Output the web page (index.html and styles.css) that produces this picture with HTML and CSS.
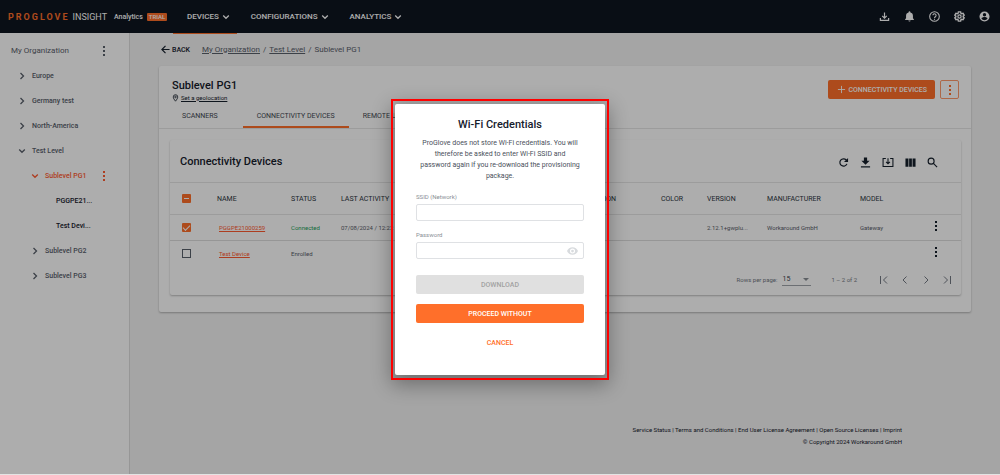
FILE: index.html
```html
<!DOCTYPE html>
<html lang="en">
<head>
<meta charset="utf-8">
<meta name="viewport" content="width=device-width, initial-scale=1">
<title>ProGlove Insight</title>
<link rel="stylesheet" href="styles.css">
</head>
<body>
<svg class="defs" aria-hidden="true">
  <symbol id="right" viewBox="0 0 8 8"><path d="M2.5 1l3 3-3 3"/></symbol>
  <symbol id="down" viewBox="0 0 8 8"><path d="M1.2 2.5l2.8 2.8 2.8-2.8"/></symbol>
  <symbol id="dots" viewBox="0 0 4 12"><path class="solid" d="M1 1h2v2H1zM1 5h2v2H1zM1 9h2v2H1z"/></symbol>
</svg>
<div class="app">
  <header class="topbar">
    <div class="brand">
      <span class="logo">PROGLOVE</span><span class="product">INSIGHT</span>
      <span class="edition">Analytics</span><span class="trial">TRIAL</span>
    </div>
    <nav class="menu">
      <button class="menu-item active">DEVICES <svg class="chev"><use href="#down"/></svg></button>
      <button class="menu-item">CONFIGURATIONS <svg class="chev"><use href="#down"/></svg></button>
      <button class="menu-item">ANALYTICS <svg class="chev"><use href="#down"/></svg></button>
    </nav>
    <div class="tools">
      <button class="tool" aria-label="Downloads"><svg viewBox="0 0 24 24"><path d="M12 3v12M7 10.500l5 5 5-5M3 15v5.500h18V15" fill="none" stroke="currentColor" stroke-width="2.600"/></svg></button>
      <button class="tool" aria-label="Notifications"><svg viewBox="0 0 24 24"><path d="M12 23a2.500 2.500 0 0 0 2.500-2.500h-5A2.500 2.500 0 0 0 12 23zm7.500-7v-5.500c0-3.500-2-6.300-5.500-7V2.500a2 2 0 0 0-4 0v1c-3.500.7-5.500 3.500-5.500 7V16l-2 2v1.500h19V18z"/></svg></button>
      <button class="tool" aria-label="Help"><svg viewBox="0 0 24 24"><circle cx="12" cy="12" r="10.500" fill="none" stroke="currentColor" stroke-width="2.400"/><path d="M8.500 9.500a3.500 3.500 0 1 1 5.600 2.800C12.800 13.300 12 13.800 12 15.500" fill="none" stroke="currentColor" stroke-width="2.300"/><path d="M10.800 16.800h2.400v2.400h-2.400z"/></svg></button>
      <button class="tool" aria-label="Settings"><svg viewBox="0 0 24 24" fill="none" stroke="currentColor"><path fill="none" stroke-width="3" d="M9.500 2h5l.6 3 1.800 1 2.900-1 2.400 4.200-2.300 2v1.600l2.300 2-2.400 4.200-2.900-1-1.800 1-.6 3h-5l-.6-3-1.800-1-2.900 1-2.400-4.200 2.300-2v-1.600l-2.300-2L4.200 5l2.900 1 1.800-1z"/><circle cx="12" cy="12" r="3.500" fill="none" stroke-width="2.800"/></svg></button>
      <button class="tool" aria-label="Account"><svg viewBox="0 0 24 24"><path fill-rule="evenodd" d="M12 1a11 11 0 1 0 0 22 11 11 0 0 0 0-22zm0 3.500a3.700 3.700 0 1 1 0 7.400 3.700 3.700 0 0 1 0-7.400zM12 20c-2.800 0-5.200-1.400-6.600-3.500.1-2.200 4.400-3.300 6.600-3.300s6.500 1.100 6.600 3.300A7.900 7.900 0 0 1 12 20z"/></svg></button>
    </div>
  </header>
  <div class="body">
    <aside class="sidebar">
      <div class="node root"><span class="label">My Organization</span><button class="more" aria-label="Organization actions"><svg class="dots"><use href="#dots"/></svg></button></div>
      <div class="node"><svg class="chev"><use href="#right"/></svg><span class="label">Europe</span></div>
      <div class="node"><svg class="chev"><use href="#right"/></svg><span class="label">Germany test</span></div>
      <div class="node"><svg class="chev"><use href="#right"/></svg><span class="label">North-America</span></div>
      <div class="node"><svg class="chev"><use href="#down"/></svg><span class="label">Test Level</span></div>
      <div class="node sub current"><svg class="chev"><use href="#down"/></svg><span class="label">Sublevel PG1</span><button class="more" aria-label="Level actions"><svg class="dots"><use href="#dots"/></svg></button></div>
      <div class="node leaf"><span class="label">PGGPE21...</span></div>
      <div class="node leaf"><span class="label">Test Devi...</span></div>
      <div class="node sub"><svg class="chev"><use href="#right"/></svg><span class="label">Sublevel PG2</span></div>
      <div class="node sub"><svg class="chev"><use href="#right"/></svg><span class="label">Sublevel PG3</span></div>
    </aside>
    <main class="main">
      <div class="crumbs">
        <button class="back"><svg viewBox="0 0 10 10"><path d="M9.500 5H1M5 1L1 5l4 4"/></svg>BACK</button>
        <nav class="trail"><a href="#">My Organization</a><span>/</span><a href="#">Test Level</a><span>/</span><span>Sublevel PG1</span></nav>
      </div>
      <section class="card">
        <div class="card-head">
          <div>
            <h1 class="title">Sublevel PG1</h1>
            <a class="geo" href="#"><svg viewBox="0 0 8 10"><path d="M4 9C2.500 7 1.200 5.300 1.200 3.700a2.800 2.800 0 0 1 5.600 0C6.800 5.300 5.500 7 4 9z"/><circle cx="4" cy="3.700" r="1"/></svg><span>Set a geolocation</span></a>
          </div>
          <div class="card-actions">
            <button class="add"><svg viewBox="0 0 10 10"><path d="M5 1v8M1 5h8"/></svg>CONNECTIVITY DEVICES</button>
            <button class="outline" aria-label="More actions"><svg class="dots"><use href="#dots"/></svg></button>
          </div>
        </div>
        <div class="tabs">
          <button class="tab">SCANNERS</button>
          <button class="tab selected">CONNECTIVITY DEVICES</button>
          <button class="tab">REMOTE UPDATES</button>
        </div>
        <div class="panel">
          <div class="panel-head">
            <h2 class="title">Connectivity Devices</h2>
            <div class="panel-tools">
              <button class="tool" aria-label="Refresh"><svg viewBox="0 0 24 24"><path d="M19.500 15a8 8 0 1 1-1.500-8.500l2 2" fill="none" stroke="currentColor" stroke-width="2.600"/><path d="M22 2v9h-9z"/></svg></button>
              <button class="tool" aria-label="Download"><svg viewBox="0 0 24 24"><path d="M8.500 1h7v7H21l-9 9-9-9h5.500zM2 20h20v3H2z"/></svg></button>
              <button class="tool wide" aria-label="Import"><svg viewBox="0 0 28 24"><path d="M9 2.500H2.500v19h23v-19H19M14 2v12M9.500 10.500L14 15l4.500-4.500" fill="none" stroke="currentColor" stroke-width="2.500"/></svg></button>
              <button class="tool" aria-label="Columns"><svg viewBox="0 0 24 24"><path d="M1 3h6.500v18H1zM9 3h6v18H9zM16.500 3H23v18h-6.500z"/></svg></button>
              <button class="tool" aria-label="Search"><svg viewBox="0 0 24 24"><g fill="none" stroke="currentColor" stroke-width="2.500"><circle cx="9" cy="9" r="6.500"/><path d="M14 14l8 8"/></g></svg></button>
            </div>
          </div>
          <table class="grid">
            <colgroup><col class="c-check"><col class="c-name"><col class="c-status"><col><col class="c-location"><col class="c-color"><col class="c-version"><col class="c-maker"><col class="c-model"><col class="c-more"></colgroup>
            <thead><tr><th><input class="box mixed" type="checkbox" aria-label="Select all"></th><th>NAME</th><th>STATUS</th><th>LAST ACTIVITY</th><th>LOCATION</th><th>COLOR</th><th>VERSION</th><th>MANUFACTURER</th><th>MODEL</th><th></th></tr></thead>
            <tbody>
              <tr><td><input class="box" type="checkbox" checked aria-label="Select PGGPE21000259"></td><td><a href="#">PGGPE21000259</a></td><td class="ok">Connected</td><td>07/08/2024 / 12:22</td><td></td><td></td><td>2.12.1+gwplu...</td><td>Workaround GmbH</td><td>Gateway</td><td><button class="more" aria-label="Device actions"><svg class="dots"><use href="#dots"/></svg></button></td></tr>
              <tr><td><input class="box" type="checkbox" aria-label="Select Test Device"></td><td><a href="#">Test Device</a></td><td>Enrolled</td><td></td><td></td><td></td><td></td><td></td><td></td><td><button class="more" aria-label="Device actions"><svg class="dots"><use href="#dots"/></svg></button></td></tr>
            </tbody>
          </table>
          <div class="pager">
            <label for="rows">Rows per page:</label>
            <span class="select"><select id="rows"><option>15</option><option>30</option></select></span>
            <span class="range">1 – 2 of 2</span>
            <div class="pages">
              <button aria-label="First page"><svg viewBox="0 0 10 8"><path d="M1.500 0v8M8 .5L4.500 4 8 7.500"/></svg></button>
              <button aria-label="Previous page"><svg viewBox="0 0 10 8"><path d="M6.500.5L3 4l3.500 3.500"/></svg></button>
              <button aria-label="Next page"><svg viewBox="0 0 10 8"><path d="M3.500.5L7 4 3.500 7.500"/></svg></button>
              <button aria-label="Last page"><svg viewBox="0 0 10 8"><path d="M8.500 0v8M2 .5L5.500 4 2 7.500"/></svg></button>
            </div>
          </div>
        </div>
      </section>
      <footer class="footer">
        <div><a href="#">Service Status</a> | <a href="#">Terms and Conditions</a> | <a href="#">End User License Agreement</a> | <a href="#">Open Source Licenses</a> | <a href="#">Imprint</a></div>
        <div>© Copyright 2024 Workaround GmbH</div>
      </footer>
    </main>
  </div>
  <div class="overlay">
    <div class="frame">
      <form class="dialog" role="dialog" aria-labelledby="dialog-title">
        <h2 class="title" id="dialog-title">Wi-Fi Credentials</h2>
        <p class="note">ProGlove does not store Wi-Fi credentials. You will therefore be asked to enter Wi-Fi SSID and password again if you re-download the provisioning package.</p>
        <label for="ssid">SSID (Network)</label>
        <div class="field"><input id="ssid" type="text"></div>
        <label for="pass">Password</label>
        <div class="field"><input id="pass" type="password"><button type="button" class="eye" aria-label="Show password"><svg viewBox="0 0 24 16"><path fill-rule="evenodd" d="M12 0C6.500 0 2 3.300 0 8c2 4.700 6.500 8 12 8s10-3.300 12-8c-2-4.700-6.500-8-12-8zm0 13.500a5.500 5.500 0 1 1 0-11 5.500 5.500 0 0 1 0 11zM12 5a3 3 0 1 0 0 6 3 3 0 0 0 0-6z"/></svg></button></div>
        <button type="button" class="btn" disabled>DOWNLOAD</button>
        <button type="button" class="btn primary">PROCEED WITHOUT</button>
        <button type="button" class="btn text">CANCEL</button>
      </form>
    </div>
  </div>
</div>
</body>
</html>
```
FILE: styles.css
```css
* { box-sizing: border-box; }
body {
  margin: 0;
  background: #e4e4e4;
  color: #16202c;
  font: 7px/10px Roboto, "Liberation Sans", sans-serif;
}
button, input, select { font: inherit; color: inherit; }
button { padding: 0; border: 0; background: none; }
a { color: inherit; }
svg { display: block; fill: currentColor; overflow: visible; }
.defs { position: absolute; width: 0; height: 0; }

.app {
  position: relative;
  display: flex;
  flex-direction: column;
  min-height: calc(100vh - 1px);
  background: #f3f3f3;
}
.title { margin: 0; font-size: 11px; line-height: 14px; font-weight: 500; }
.chev { width: 8px; height: 8px; fill: none; stroke: currentColor; stroke-width: 1.3; }
.dots { width: 4px; height: 12px; }

/* Top bar */
.topbar { display: flex; height: 33px; background: #0e1520; color: #fff; }
.brand { display: flex; align-items: center; width: 173px; padding-left: 8px; }
.logo { color: #ff6f2a; font-size: 9px; font-weight: 700; letter-spacing: 2px; }
.product { margin-left: 3px; font-size: 9px; }
.edition { margin-left: 7px; font-weight: 500; }
.trial { margin-left: 4px; padding: 0 2px; border-radius: 1px; background: #ff6f2a; font-size: 6px; line-height: 8px; font-weight: 500; }
.menu { display: flex; }
.menu-item { display: flex; align-items: center; gap: 3px; padding: 0 7px 0 14px; font-size: 8px; font-weight: 500; white-space: nowrap; }
.menu-item.active { box-shadow: 0 1px #ff6f2a; }
.tools { display: flex; align-items: center; gap: 14px; margin-left: auto; padding-right: 10px; }
.tool svg { width: 11px; height: 11px; }
.tool.wide svg { width: 12px; }

/* Organization tree */
.body { display: flex; flex: 1; }
.sidebar { width: 130px; flex: none; padding-top: 5px; border-right: 1px solid #dedede; background: #fff; color: #59606b; }
.node { display: flex; align-items: center; gap: 6px; height: 25px; padding: 0 23px 0 18px; font-weight: 500; }
.node.root { padding-left: 11px; font-size: 8px; font-weight: 400; }
.node.sub { padding-left: 31px; }
.node.leaf { padding-left: 56px; color: #16202c; }
.node .more { margin-left: auto; }
.node.current { color: #ff5a30; }

/* Page */
.main { flex: 1; min-width: 0; padding: 0 29px; }
.crumbs { display: flex; align-items: center; gap: 12px; height: 33px; font-size: 8px; }
.back { display: flex; align-items: center; gap: 2px; padding-left: 2px; font-size: 7px; font-weight: 500; }
.back svg { width: 9px; height: 9px; fill: none; stroke: currentColor; stroke-width: 1.3; }
.trail { display: flex; gap: 3px; color: #59606b; }
.card { border-radius: 2px; background: #fff; box-shadow: 0 1px 2px #0004; padding-bottom: 17px; }
.card-head { display: flex; justify-content: space-between; padding: 13px 12px 0 13px; }
.geo { display: flex; align-items: center; gap: 2px; height: 9px; font-size: 6px; }
.geo svg { width: 7px; height: 8px; fill: none; stroke: currentColor; }
.card-actions { display: flex; gap: 5px; padding-top: 1px; }
.add { display: flex; align-items: center; gap: 2px; height: 19px; padding: 0 8px 0 9px; border-radius: 2px; background: #ff6f2a; color: #fff; font-weight: 500; }
.add svg { width: 9px; height: 9px; stroke: currentColor; }
.outline { display: grid; place-items: center; width: 19px; height: 19px; border: 1px solid #ff9a6b; border-radius: 2px; color: #ff6f2a; }
.tabs { display: flex; padding-left: 9px; border-bottom: 1px solid #e6e6e6; }
.tab { height: 26px; padding: 2px 14px 0; color: #3f4752; white-space: nowrap; }
.tab.selected { margin-left: 11px; border-bottom: 2px solid #ff6f2a; padding-top: 4px; }

.panel { margin: 11px 10px 0 11px; border-radius: 2px; box-shadow: 0 1px 2px #0004; }
.panel-head { display: flex; align-items: center; justify-content: space-between; height: 42px; padding: 2px 23px 0 10px; }
.panel-tools { display: flex; gap: 11px; }
.grid { width: 100%; table-layout: fixed; border-collapse: collapse; color: #59606b; font-size: 6px; text-align: left; }
.c-check { width: 47px; }
.c-name { width: 74px; }
.c-status { width: 50px; }
.c-location { width: 78px; }
.c-color { width: 46px; }
.c-version { width: 60px; }
.c-maker { width: 93px; }
.c-model { width: 66px; }
.c-more { width: 35px; }
.grid th, .grid td { height: 26px; padding: 0; white-space: nowrap; }
.grid th { height: 32px; border: solid #e6e6e6; border-width: 1px 0; color: #2b3440; font-size: 7px; font-weight: 400; }
.grid td:nth-child(2) { padding-left: 2px; color: #ff5a30; }
.grid th:first-child, .grid td:first-child { padding-left: 12px; }
.grid td:last-child { padding-left: 8px; color: #16202c; }
.grid tbody tr:first-child td { border-bottom: 1px solid #dedede; }
.grid td.ok { color: #22a25c; }
.box { display: grid; place-items: center; appearance: none; width: 9px; height: 9px; margin: 0; border: 1px solid #59606b; }
.box:checked, .box.mixed { border: 0; border-radius: 1px; background: #ff6f2a; }
.box:checked::after { content: ""; width: 6px; height: 3px; border: solid #fff; border-width: 0 0 1px 1px; transform: translateY(-1px) rotate(-45deg); }
.box.mixed::after { content: ""; width: 5px; height: 1px; background: #fff; }

.pager { display: flex; align-items: center; justify-content: flex-end; height: 28px; padding: 0 9px 2px 0; color: #737983; font-size: 6px; }
.select { position: relative; margin: 0 20px 0 5px; border-bottom: 1px solid #a0a4aa; }
.select::after { content: ""; position: absolute; right: 2px; top: 5px; border: solid transparent; border-width: 3px 3px 0; border-top-color: #8a8f96; }
.select select { appearance: none; display: block; width: 29px; height: 12px; padding: 0; border: 0; background: none; color: #3f4752; font-size: 7px; }
.range { margin-right: 22px; }
.pages { display: flex; gap: 11px; }
.pages svg { width: 10px; height: 8px; fill: none; stroke: #737983; }

.footer { padding: 112px 69px 16px 0; font-size: 6px; line-height: 12px; text-align: right; color: #16202c; }
.footer a { text-decoration: none; }

/* Dialog */
.overlay { position: absolute; inset: 0; display: flex; align-items: center; justify-content: center; padding-top: 5px; background: rgba(0, 0, 0, .32); }
.frame { position: relative; padding: 5px 4px; }
.frame::after { content: ""; position: absolute; inset: 0; border: 2px solid #f00; pointer-events: none; }
.dialog { display: flex; flex-direction: column; width: 210px; padding: 14px 21px 23px; border-radius: 2px; background: #fff; box-shadow: 0 6px 20px 4px #0005; }
.dialog .title { text-align: center; }
.note { margin: 6px 3px 10px; line-height: 11px; text-align: center; color: #4a515b; }
.dialog label { margin-bottom: 2px; color: #8a8f96; font-size: 6px; }
.field { display: flex; height: 17px; margin-bottom: 9px; border: 1px solid #dfe1e4; border-radius: 2px; }
.field input { flex: 1; min-width: 0; padding: 0 4px; border: 0; background: none; outline: 0; }
.eye { padding: 0 5px; color: #d8dbde; }
.eye svg { width: 11px; height: 8px; }
.btn { height: 19px; margin-top: 10px; border-radius: 2px; background: #e0e0e0; color: #a2a2a2; font-weight: 500; }
.field + .btn { margin-top: 7px; }
.btn.primary { background: #ff6f2a; color: #fff; }
.btn.text { background: none; color: #ff6f2a; }
```
